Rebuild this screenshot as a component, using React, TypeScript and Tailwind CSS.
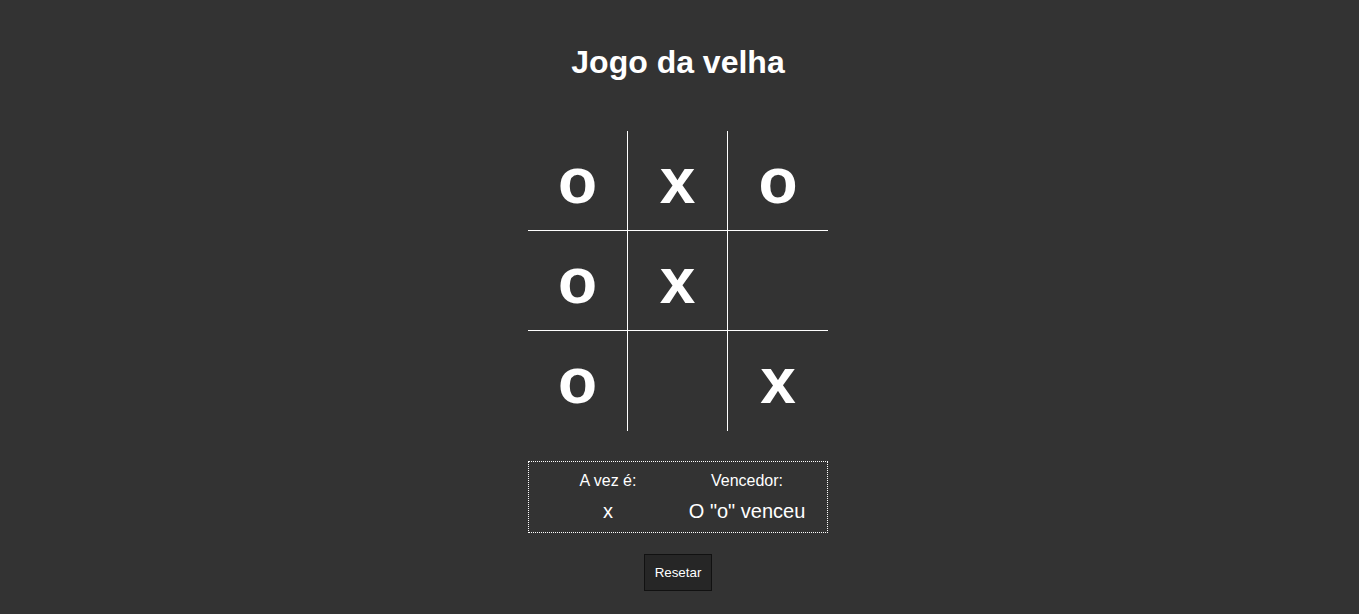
const board = ["o", "x", "o", "o", "x", "", "o", "", "x"];

export default function App() {
  return (
    <div className="min-h-[614px] bg-[#333333] text-white flex flex-col items-center pr-[3px] font-['Liberation_Sans',Arial,sans-serif]">
      <h1 className="mt-[44px] text-[32px] leading-[37px] font-bold">Jogo da velha</h1>

      <div className="mt-[50px] grid grid-cols-3 w-[300px]">
        {board.map((v, i) => (
          <div
            key={i}
            className={`h-[100px] flex items-center justify-center text-[64px] leading-none font-bold ${
              i % 3 !== 2 ? "border-r border-white" : ""
            } ${i < 6 ? "border-b border-white" : ""}`}
          >
            <span className="leading-[72px]">{v}</span>
          </div>
        ))}
      </div>

      <div className="mt-[30px] w-[300px] h-[72px] border border-dotted border-white flex pl-[50px] pt-[10px]">
        <div className="w-[58px] flex flex-col items-center">
          <span className="text-[16px] leading-[18px] whitespace-nowrap">A vez é:</span>
          <span className="mt-[10px] text-[20px] leading-[23px]">x</span>
        </div>
        <div className="ml-[52px] w-[116px] flex flex-col items-center">
          <span className="text-[16px] leading-[18px] whitespace-nowrap">Vencedor:</span>
          <span className="mt-[10px] text-[20px] leading-[23px] whitespace-nowrap">O "o" venceu</span>
        </div>
      </div>

      <button className="mt-[21px] h-[37px] px-[10px] bg-[#262626] border border-[#111111] text-[13.333px] text-white">
        Resetar
      </button>
    </div>
  );
}
